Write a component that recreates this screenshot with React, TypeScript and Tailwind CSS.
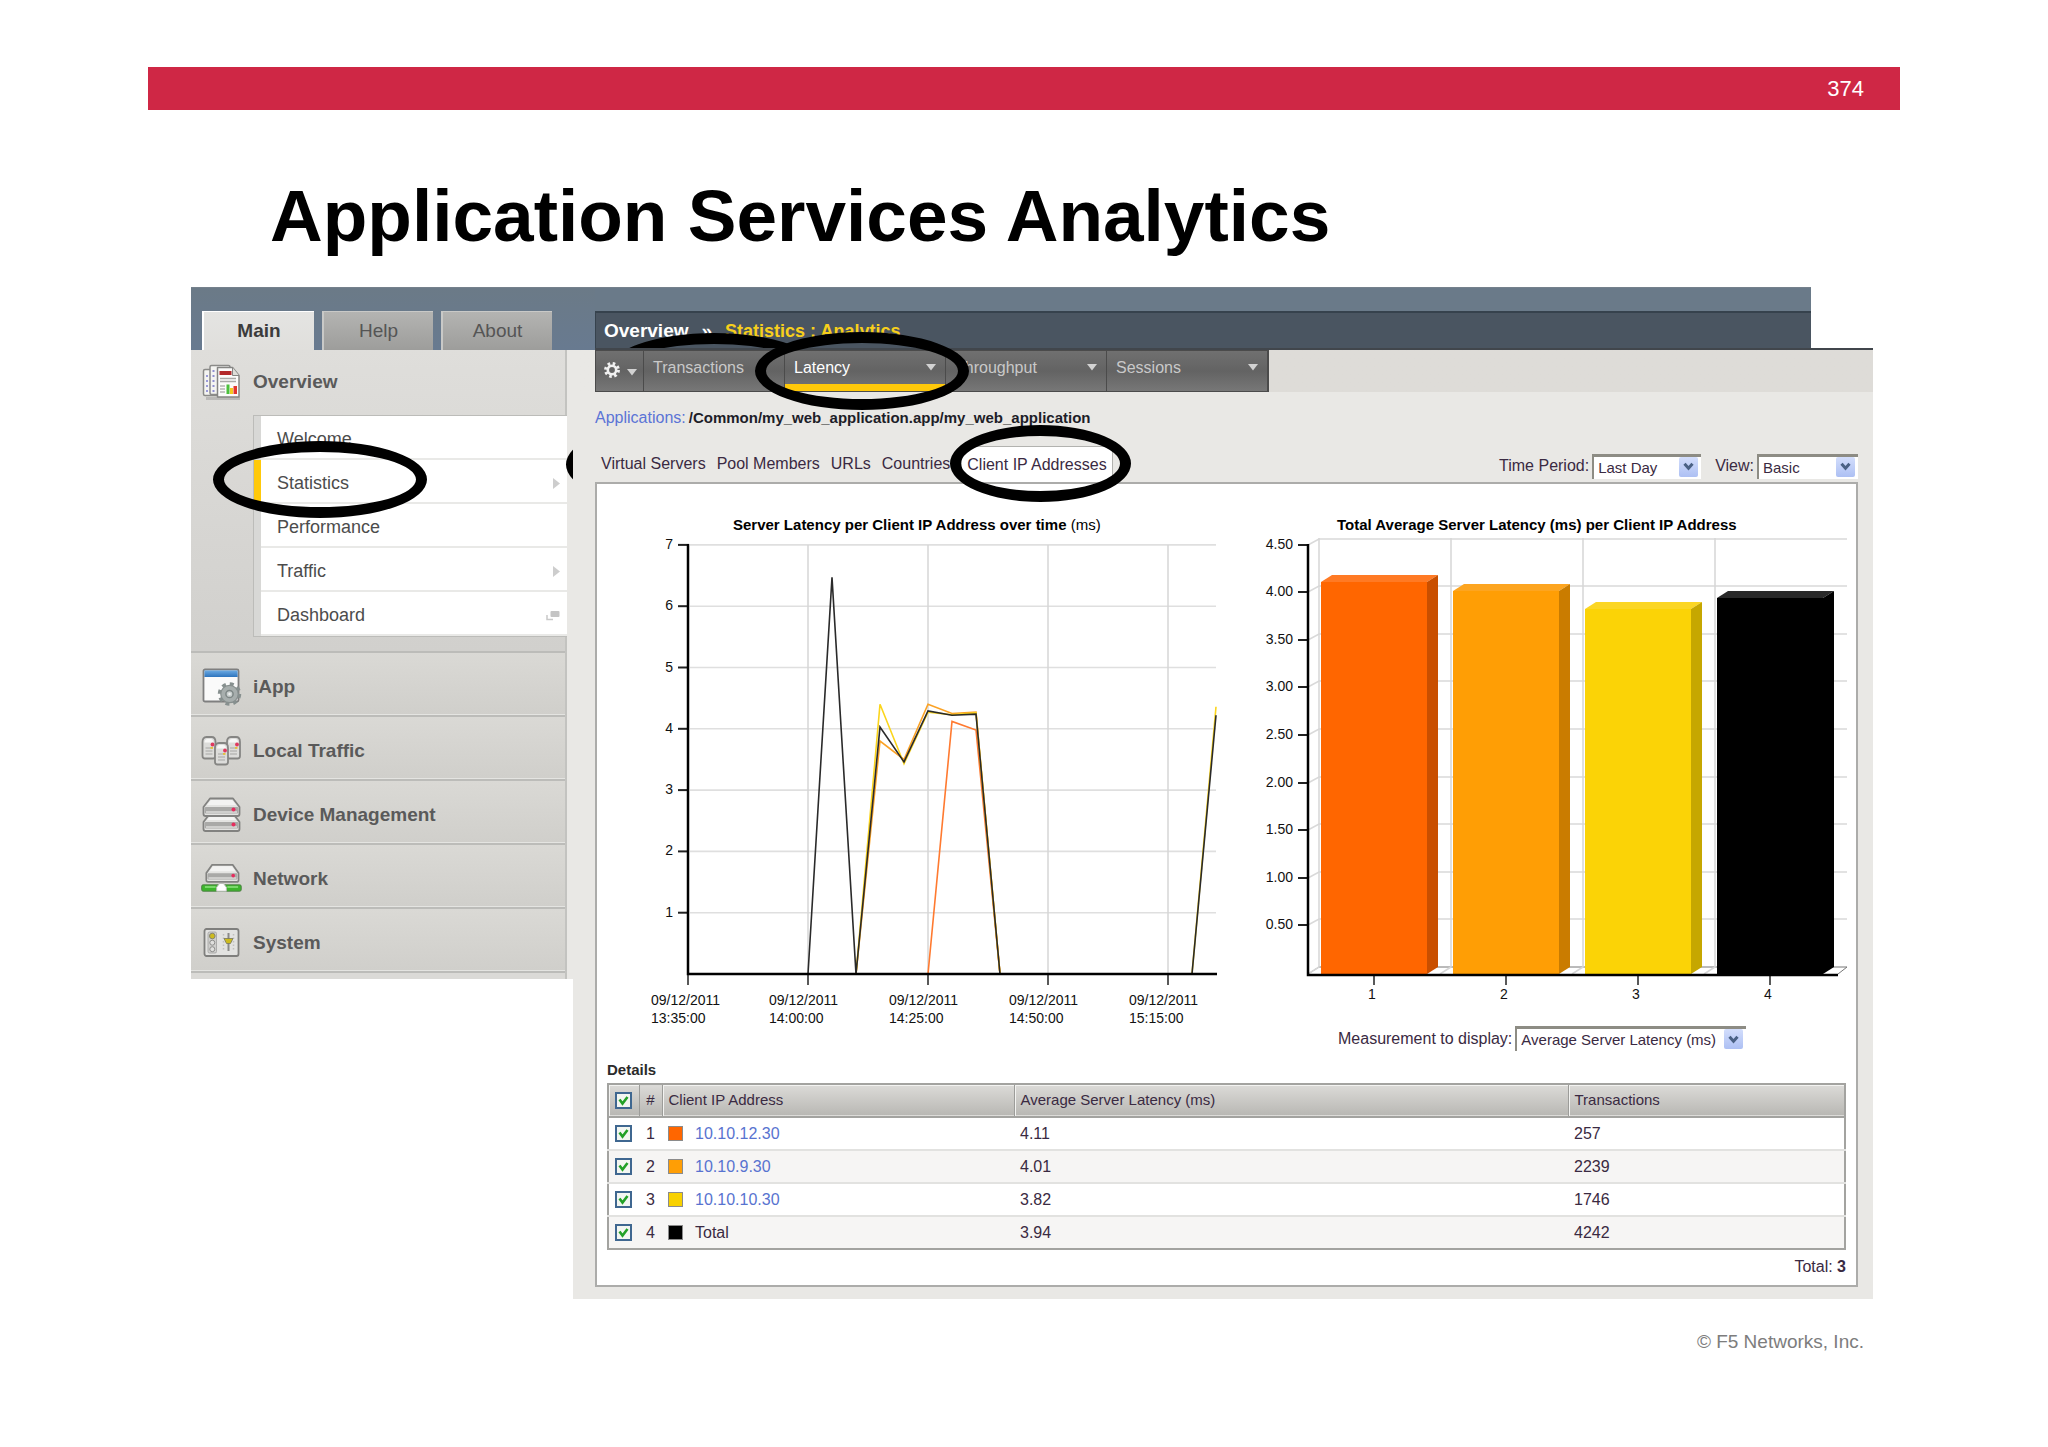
import React from "react";

const ring = "pointer-events-none absolute z-20 rounded-[50%] border-[11px] border-black";

function Ring({ className }: { className: string }) {
  return <span aria-hidden="true" className={`${ring} ${className}`} />;
}

/* ---------- sidebar icons ---------- */

function ReportsIcon() {
  return (
    <svg width="40" height="38" viewBox="0 0 40 38">
      <path d="M4 34.500h34" stroke="#00000028" strokeWidth="3" />
      <rect x="1.5" y="5.5" width="20" height="26" rx="1.5" fill="#f4f4f2" stroke="#8b8b89" strokeWidth="1.5" />
      <path d="M5 11v18" stroke="#9a9ad8" strokeWidth="2" strokeDasharray="2 3" />
      <rect x="8" y="1.5" width="20" height="29" rx="1.5" fill="#f4f4f2" stroke="#8b8b89" strokeWidth="1.5" />
      <path d="M11.500 6v23" stroke="#8f8fd0" strokeWidth="2" strokeDasharray="2 3" />
      <path d="M15.500 3.500h15l6.500 8v21.500h-21.500z" fill="#fbfbfa" stroke="#858583" strokeWidth="1.500" strokeLinejoin="round" />
      <path d="M30.500 3.500v8h6.500" fill="#deded9" stroke="#858583" />
      <rect x="17.500" y="7" width="12" height="4" fill="#b3282a" />
      <path d="M18 14.500h16M18 17.500h16" stroke="#a9a9a7" strokeWidth="1.500" />
      <path d="M18 22h5M18 25h5M18 28h5" stroke="#b5b5b3" strokeWidth="1.500" />
      <rect x="24.500" y="20.500" width="3" height="9.500" fill="#4bc03c" />
      <rect x="28" y="24" width="3" height="6" fill="#f3c820" />
      <rect x="31.500" y="22" width="3.500" height="8" fill="#e2362e" />
    </svg>
  );
}

function IAppIcon() {
  return (
    <svg width="40" height="40" viewBox="0 0 40 40">
      <defs>
        <linearGradient id="iappBar" x1="0" y1="0" x2="0" y2="1">
          <stop offset="0" stopColor="#6cabe4" />
          <stop offset="1" stopColor="#2e74bd" />
        </linearGradient>
      </defs>
      <rect x="1.500" y="2.500" width="35" height="32" rx="1.500" fill="#fafafa" stroke="#7f7f7f" strokeWidth="1.800" />
      <rect x="2.400" y="3.400" width="33.200" height="6.600" fill="url(#iappBar)" />
      <circle cx="27.500" cy="27" r="9.500" fill="none" stroke="#87908f" strokeWidth="4.500" strokeDasharray="3.730 3.730" />
      <circle cx="27.500" cy="27" r="8.700" fill="#a7aead" stroke="#878f8e" strokeWidth="1.200" />
      <circle cx="27.500" cy="27" r="3.600" fill="#c9cfce" stroke="#7d8685" strokeWidth="1.500" />
      <circle cx="27.500" cy="27" r="1.200" fill="#eef0f0" />
    </svg>
  );
}

function TrafficIcon() {
  const tower = (x: number, y: number) => (
    <g key={x} transform={`translate(${x} ${y})`}>
      <path d="M1 6 Q1 1 5 1h5q4 0 4 5v14q0 2.500-2.500 2.500h-8Q1 22.500 1 20z" fill="#dcdcda" stroke="#858583" strokeWidth="1.800" />
      <path d="M3 6.500q0-3.500 3-3.500h3q3 0 3 3.500z" fill="#f7f7f6" />
      <path d="M4 12h7M4 15h7M4 18h7" stroke="#a6a6a4" strokeWidth="1" />
      <circle cx="11" cy="8.500" r="1.900" fill="#e0395f" />
      <rect x="9" y="11" width="2.500" height="1.800" fill="#e5c23a" />
    </g>
  );
  return (
    <svg width="41" height="32" viewBox="0 0 41 32">
      {tower(0.5, 1)}
      {tower(25, 1)}
      {tower(13, 7)}
    </svg>
  );
}

function Server({ y }: { y: number }) {
  return (
    <g transform={`translate(0 ${y})`}>
      <path d="M8 1h23l6.500 8.500v7q0 2-2 2h-32q-2 0-2-2v-7z" fill="#e3e3e1" stroke="#828280" strokeWidth="1.800" strokeLinejoin="round" />
      <path d="M9 2.500h21l4 5h-29z" fill="#f3f3f2" />
      <rect x="2.800" y="9.500" width="33.500" height="6.500" rx="1" fill="#a9a9a7" />
      <path d="M4 14.500h31" stroke="#cfcfcd" strokeWidth="2" />
      <circle cx="31.500" cy="12" r="2" fill="#e62d5e" />
    </g>
  );
}

function DevicesIcon() {
  return (
    <svg width="40" height="36" viewBox="0 0 40 36">
      <Server y={15.500} />
      <Server y={0.500} />
    </svg>
  );
}

function NetworkIcon() {
  return (
    <svg width="42" height="32" viewBox="0 0 42 32">
      <g transform="translate(4 0.500) scale(0.920 1)">
        <Server y={0} />
      </g>
      <rect x="0.700" y="22" width="40.500" height="6.500" rx="1.500" fill="#3db52c" stroke="#4d7f45" />
      <path d="M4 24.300h11M27 24.300h11" stroke="#8fe37f" strokeWidth="1.500" />
      <path d="M16 28.500v-4l3-4h4l3 4v4z" fill="#fff" stroke="#b9b9b7" />
    </svg>
  );
}

function SystemIcon() {
  return (
    <svg width="38" height="32" viewBox="0 0 38 32">
      <rect x="1.500" y="2" width="34" height="27" rx="2" fill="#e2e2e0" stroke="#7f7f7d" strokeWidth="1.800" />
      <rect x="5" y="5" width="8.500" height="21" rx="1.500" fill="#cfcfcd" stroke="#a1a19f" strokeWidth="0.800" />
      <circle cx="9.300" cy="9" r="2.800" fill="#cdbb1e" stroke="#85856f" />
      <circle cx="9.300" cy="15.700" r="2.500" fill="#e0e0de" stroke="#8e8e8c" />
      <circle cx="9.300" cy="22.200" r="2.500" fill="#e0e0de" stroke="#8e8e8c" />
      <path d="M25.500 6v18" stroke="#8a8a88" strokeWidth="2" />
      <path d="M20.500 7v16M30.500 7v16" stroke="#c0c0be" strokeWidth="1.500" strokeDasharray="1.500 2" />
      <path d="M21 11.500h9l-2.500 5h-4z" fill="#cdbb1e" stroke="#77775f" strokeWidth="0.800" />
    </svg>
  );
}

/* ---------- form controls ---------- */

function Chevron() {
  return (
    <span className="pointer-events-none absolute top-[3px] right-[3px] bottom-[2px] flex w-[19px] items-center justify-center rounded-[2px] bg-gradient-to-b from-[#d3defc] to-[#adc0f3]">
      <svg width="11" height="9" viewBox="0 0 11 9">
        <path d="M1.500 1.800l4 4.400 4-4.400" fill="none" stroke="#4a6185" strokeWidth="3" />
      </svg>
    </span>
  );
}

function Dropdown({ id, label, value, width }: { id: string; label: string; value: string; width: string }) {
  return (
    <div className="flex items-center gap-[3px] text-[16px] text-[#3a2a42]">
      <label htmlFor={id} className="whitespace-nowrap">{label}</label>
      <span className={`relative block h-[25px] ${width}`}>
        <select
          id={id}
          defaultValue={value}
          className="block h-full w-full appearance-none border-t-[3px] border-l-2 border-[#8d8c84] bg-white pl-1 text-[15px] leading-[20px] text-[#3a2a42] outline-none"
        >
          <option>{value}</option>
        </select>
        <Chevron />
      </span>
    </div>
  );
}

function Check({ label }: { label: string }) {
  return (
    <span className="relative block size-[17px]">
      <input
        type="checkbox"
        defaultChecked
        aria-label={label}
        className="peer block size-full appearance-none border-2 border-[#3f6790] bg-[#f3f6f1]"
      />
      <svg className="pointer-events-none absolute inset-0 hidden peer-checked:block" width="17" height="17" viewBox="0 0 17 17">
        <path d="M4.500 7.500l3 4 5-6.500" fill="none" stroke="#23a127" strokeWidth="2.600" />
      </svg>
    </span>
  );
}

function Caret({ className = "" }: { className?: string }) {
  return (
    <svg className={className} width="10" height="7" viewBox="0 0 10 7">
      <path d="M0 0h10l-5 6.500z" fill="#d2d2d2" />
    </svg>
  );
}

/* ---------- charts ---------- */

const px = (k: number) => 91 + 24 * k;
const py = (v: number) => Math.round((490 - 61.3 * v) * 10) / 10;
const line = (pts: number[][]) => pts.map(([k, v]) => `${px(k)},${py(v)}`).join(" ");

const series = [
  { color: "#ff7a30", pts: [[10, 0], [11, 4.12], [12, 3.98], [13, 0]] },
  { color: "#fba225", pts: [[7, 0], [8, 3.8], [9, 3.5], [10, 4.4], [11, 4.25], [12, 4.27], [13, 0]] },
  { color: "#fbd51c", pts: [[7, 0], [8, 4.4], [9, 3.43], [10, 4.27], [11, 4.23], [12, 4.26], [13, 0]] },
  { color: "#fbd51c", pts: [[21, 0], [22, 4.36]] },
  {
    color: "#2a2a2a",
    pts: [[5, 0], [6, 6.47], [7, 0], [8, 4.03], [9, 3.46], [10, 4.29], [11, 4.22], [12, 4.24], [13, 0]],
  },
  { color: "#2a2a2a", pts: [[21, 0], [22, 4.22]] },
];

const times = ["13:35:00", "14:00:00", "14:25:00", "14:50:00", "15:15:00"];

function LineChart() {
  return (
    <svg width="630" height="550" viewBox="0 0 630 550" role="img" aria-label="Server latency over time" className="font-['Liberation_Sans',Arial,sans-serif]">
      <text x="136" y="46" fontSize="15" fontWeight="bold" fill="#000">
        Server Latency per Client IP Address over time <tspan fontWeight="normal">(ms)</tspan>
      </text>
      {[1, 2, 3, 4, 5, 6, 7].map((v) => (
        <g key={v}>
          <path d={`M93 ${py(v)}H619`} stroke="#dfdfdf" strokeWidth="1.600" />
          <path d={`M81 ${py(v)}H92`} stroke="#222" strokeWidth="2" />
          <text x="76" y={py(v) + 4} fontSize="14" textAnchor="end" fill="#111">{v}</text>
        </g>
      ))}
      {times.map((t, i) => {
        const left = px(i * 5) - (i === 0 ? 37 : 39);
        return (
          <g key={t}>
            {i > 0 && <path d={`M${px(i * 5)} 61V490`} stroke="#d6d6d6" strokeWidth="1.500" />}
            <path d={`M${px(i * 5)} 490V501`} stroke="#222" strokeWidth="1.500" />
            <text x={left} y="521" fontSize="14" fill="#111">09/12/2011</text>
            <text x={left} y="539" fontSize="14" fill="#111">{t}</text>
          </g>
        );
      })}
      {series.map((s, i) => (
        <polyline key={i} points={line(s.pts)} fill="none" stroke={s.color} strokeWidth="1.600" />
      ))}
      <path d="M91 60V490H620" fill="none" stroke="#000" strokeWidth="2.500" />
    </svg>
  );
}

const bars = [
  { v: 4.11, front: "#ff6600", top: "#ff7a24", side: "#c94f00" },
  { v: 4.01, front: "#ff9e05", top: "#fda520", side: "#ca7c00" },
  { v: 3.82, front: "#fbd306", top: "#fbd624", side: "#c6a700" },
  { v: 3.94, front: "#000000", top: "#292929", side: "#000000" },
];

const by = (v: number) => Math.round(489 - 95.2 * v);

function BarChart() {
  return (
    <svg width="600" height="530" viewBox="0 0 600 530" role="img" aria-label="Average latency per address" className="font-['Liberation_Sans',Arial,sans-serif]">
      <text x="87" y="46" fontSize="15" fontWeight="bold" fill="#000">
        Total Average Server Latency (ms) per Client IP Address
      </text>
      {[0.5, 1, 1.5, 2, 2.5, 3, 3.5, 4, 4.5].map((v) => (
        <g key={v}>
          <path d={`M58 ${by(v)}L69 ${by(v) - 6}H597`} fill="none" stroke="#d9d9d9" strokeWidth="1.500" />
          <path d={`M48 ${by(v)}H58`} stroke="#222" strokeWidth="2" />
          <text x="43" y={by(v) + 4} fontSize="14" textAnchor="end" fill="#111">{v.toFixed(2)}</text>
        </g>
      ))}
      <path d="M58 490L69 483H597L588 490" fill="none" stroke="#777" />
      {bars.map((b, i) => {
        const x = 71 + 132 * i;
        const y = by(b.v);
        return (
          <g key={i}>
            <path d={`M${x - 2} 54V483l-11 7`} fill="none" stroke="#d6d6d6" strokeWidth="1.500" />
            <path d={`M${x} ${y}l11-7h106l-11 7z`} fill={b.top} />
            <path d={`M${x + 106} ${y}l11-7V483l-11 7z`} fill={b.side} />
            <rect x={x} y={y} width="106" height={490 - y} fill={b.front} />
            <path d={`M${x + 53} 490V501`} stroke="#222" strokeWidth="1.500" />
            <text x={x + 51} y="515" fontSize="14" textAnchor="middle" fill="#111">{i + 1}</text>
          </g>
        );
      })}
      <path d="M58 60V491H588" fill="none" stroke="#000" strokeWidth="2.500" />
    </svg>
  );
}

/* ---------- data ---------- */

const sections = [
  { name: "iApp", icon: <IAppIcon /> },
  { name: "Local Traffic", icon: <TrafficIcon /> },
  { name: "Device Management", icon: <DevicesIcon /> },
  { name: "Network", icon: <NetworkIcon /> },
  { name: "System", icon: <SystemIcon /> },
];

const rows = [
  { ip: "10.10.12.30", swatch: "bg-[#ff6600]", avg: "4.11", count: "257", link: true },
  { ip: "10.10.9.30", swatch: "bg-[#ff9e05]", avg: "4.01", count: "2239", link: true },
  { ip: "10.10.10.30", swatch: "bg-[#f8d100]", avg: "3.82", count: "1746", link: true },
  { ip: "Total", swatch: "bg-black", avg: "3.94", count: "4242", link: false },
];

function Sidebar() {
  const item = "relative flex h-[44px] items-center border-b-2 border-[#e9e9e7] bg-white pt-1 pr-[7px] pl-4";
  const arrow = (
    <svg className="ml-auto" width="7" height="11" viewBox="0 0 7 11">
      <path d="M0 0l7 5.500L0 11z" fill="#cdcdcd" />
    </svg>
  );
  return (
    <div className="w-[382px] shrink-0">
      <div className="flex h-[63px] items-end gap-2 border-t border-[#75818c] bg-gradient-to-b from-[#6b7a87] to-[#687a90] pl-[11px] text-[19px]">
        <button className="h-[39px] w-[112px] border-t border-l-2 border-white bg-gradient-to-b from-[#e4e4e2] to-[#e0dfdc] font-bold text-[#3c3c3c]">Main</button>
        <button className="h-[39px] w-[111px] border-t border-l-2 border-[#c9c9c7] bg-gradient-to-b from-[#b4b4b2] to-[#9d9d9b] text-[#555]">Help</button>
        <button className="h-[39px] w-[111px] border-t border-l-2 border-[#c9c9c7] bg-gradient-to-b from-[#b4b4b2] to-[#9d9d9b] text-[#555]">About</button>
      </div>
      <div className="relative overflow-x-clip bg-[#e9e8e5] pr-[6px]">
        <Ring className="top-[76px] left-[375px] h-[77px] w-[181px]" />
        <nav className="border-r-2 border-[#c3c3c0] bg-[#dbdad7] pb-[6px] text-[#5a5a5a]">
          <div className="bg-gradient-to-b from-[#dfdedb] to-[#d1d0cd] pb-[14px]">
            <div className="flex h-[65px] items-center gap-[11px] pl-[11px]">
              <ReportsIcon />
              <span className="text-[19px] font-bold">Overview</span>
            </div>
            <ul className="-mr-[2px] ml-[62px] border border-r-0 border-[#bcbcb9] text-[18px] text-[#4c4c4c]">
              <li className="border-l-[7px] border-[#d8d8d6]"><a href="#welcome" className={item}>Welcome</a></li>
              <li className="relative border-l-[7px] border-[#ffc90a]">
                <a href="#statistics" className={item}>Statistics{arrow}</a>
                <Ring className="-top-[19px] -left-[48px] h-[77px] w-[214px]" />
              </li>
              <li className="border-l-[7px] border-[#d8d8d6]"><a href="#performance" className={item}>Performance</a></li>
              <li className="border-l-[7px] border-[#d8d8d6]"><a href="#traffic" className={item}>Traffic{arrow}</a></li>
              <li className="border-l-[7px] border-[#d8d8d6]">
                <a href="#dashboard" className={item}>
                  Dashboard
                  <svg className="ml-auto" width="14" height="11" viewBox="0 0 14 11">
                    <path d="M1 5v4.500h6" fill="none" stroke="#c9c9c9" strokeWidth="1.500" />
                    <rect x="4.500" y="1" width="9" height="6" rx="1" fill="#c4c4c4" />
                  </svg>
                </a>
              </li>
            </ul>
          </div>
          {sections.map((s) => (
            <a
              key={s.name}
              href="#section"
              className="flex h-[64px] items-center gap-[11px] border-t-2 border-b border-t-[#bcbcb9] border-b-[#e4e4e1] bg-gradient-to-b from-[#dad9d5] to-[#d0cfcb] pt-[7px] pl-[10px] text-[19px] font-bold"
            >
              <span className="flex w-[41px] justify-center">{s.icon}</span>
              {s.name}
            </a>
          ))}
          <div className="border-t-2 border-[#bcbcb9]" />
        </nav>
      </div>
    </div>
  );
}

function MenuBar() {
  const cell = "relative flex h-full items-start justify-between border-r border-[#4b4b4b] pt-[5px] pr-[9px] pl-[9px] text-[16px] leading-[24px]";
  return (
    <div className="flex h-[42px] bg-gradient-to-r from-[#e9e8e5] from-[22px] to-[#dedcd8] to-[22px] pl-[22px]">
      <div className="flex h-full border border-[#4b4b4b] bg-gradient-to-b from-[#707070] via-[#636363] to-[#777777] text-[#c9c9c9]">
        <button aria-label="Settings" className={`${cell} w-[48px]`}>
          <svg className="mt-[6px] -ml-[1px]" width="16" height="16" viewBox="0 0 16 16">
            <circle cx="8" cy="8" r="6.200" fill="none" stroke="#f0f0f0" strokeWidth="3.500" strokeDasharray="2.430 2.430" />
            <circle cx="8" cy="8" r="4.200" fill="none" stroke="#f0f0f0" strokeWidth="2.600" />
          </svg>
          <Caret className="mt-[13px] -mr-[3px]" />
        </button>
        <button className={`${cell} w-[141px]`}>Transactions</button>
        <button className={`${cell} w-[161px] border-b-[7px] border-b-[#ffc90a] text-white`}>
          Latency<Caret className="mt-2" />
          <Ring className="-top-[19px] -left-[30px] h-[78px] w-[214px]" />
        </button>
        <button className={`${cell} w-[161px]`}>Throughput<Caret className="mt-2" /></button>
        <button className={`${cell} w-[161px]`}>Sessions<Caret className="mt-2" /></button>
      </div>
    </div>
  );
}

function DetailsTable() {
  const head = "border-l border-[#9c9c99] px-[6px] text-left text-[15px] font-normal shadow-[inset_1px_1px_0_#f3f3f1]";
  return (
    <table className="w-full table-fixed border-collapse border-2 border-[#a3a3a0] text-[16px] text-[#3a2a42]">
      <colgroup>
        <col className="w-[31px]" />
        <col className="w-[23px]" />
        <col className="w-[352px]" />
        <col className="w-[554px]" />
        <col />
      </colgroup>
      <thead>
        <tr className="h-[33px] border-b-2 border-[#a3a3a0] bg-gradient-to-b from-[#dddcd9] to-[#b9b8b4]">
          <th className={head}><Check label="Select all" /></th>
          <th className="border-l border-[#9c9c99] text-center text-[15px] font-normal">#</th>
          <th className={head}>Client IP Address</th>
          <th className={head}>Average Server Latency (ms)</th>
          <th className={head}>Transactions</th>
        </tr>
      </thead>
      <tbody>
        {rows.map((r, i) => (
          <tr key={r.ip} className="h-[33px] border-b-2 border-[#e2e2e0] odd:bg-white even:bg-[#f6f5f4] last:border-[#a3a3a0]">
            <td className="px-[6px]"><Check label={`Select ${r.ip}`} /></td>
            <td className="text-center">{i + 1}</td>
            <td className="px-[6px]">
              <span className="flex items-center gap-[12px]">
                <span className={`size-[15px] border border-[#8b8b8b] ${r.swatch}`} />
                {r.link ? <a href="#address" className="text-[#5873d0]">{r.ip}</a> : <span>{r.ip}</span>}
              </span>
            </td>
            <td className="px-[6px]">{r.avg}</td>
            <td className="px-[6px]">{r.count}</td>
          </tr>
        ))}
      </tbody>
    </table>
  );
}

function Analytics() {
  return (
    <div className="min-w-0 flex-1">
      <div className="flex">
        <div className="w-[22px] border-t border-[#75818c] bg-gradient-to-b from-[#6b7a87] to-[#687a90]" />
        <div className="flex-1 border-b-2 border-[#41464c]">
          <div className="relative mr-[62px] h-[61px] overflow-hidden border-t border-[#75818c] bg-[#6a7a89] pt-[23px]">
            <div className="flex h-[38px] items-center gap-[13px] border-t-2 border-l border-[#36424d] bg-[#4a5561] pl-2 text-[19px] font-bold text-white">
              <span>Overview</span>
              <span>»</span>
              <span className="text-[18px] text-[#f7cf1b]">Statistics : Analytics</span>
            </div>
            <Ring className="top-[45px] left-[12px] h-[77px] w-[214px]" />
          </div>
        </div>
      </div>
      <MenuBar />
      <div className="bg-[#e9e8e5] pr-[15px] pb-[12px] pl-[22px]">
        <div className="flex h-[50px] items-center gap-[3px] pt-[2px]">
          <a href="#applications" className="text-[16px] text-[#5b74d6]">Applications:</a>
          <span className="text-[15px] font-bold text-[#1d1d28]">/Common/my_web_application.app/my_web_application</span>
        </div>
        <div className="flex h-[40px] items-center justify-between">
          <div className="flex h-full items-center gap-[11px] pt-1 pl-[6px] text-[16px] text-[#3a2a42]">
            <a href="#virtual">Virtual Servers</a>
            <a href="#pool">Pool Members</a>
            <a href="#urls">URLs</a>
            <a href="#countries">Countries</a>
            <a href="#clients" className="relative flex h-[36px] items-center border border-b-0 border-[#b2b2af] bg-white px-[5px]">
              Client IP Addresses
              <Ring className="-top-[22px] -left-[12px] h-[77px] w-[181px]" />
            </a>
          </div>
          <div className="flex gap-[14px] pt-[8px]">
            <Dropdown id="period" label="Time Period:" value="Last Day" width="w-[109px]" />
            <Dropdown id="view" label="View:" value="Basic" width="w-[101px]" />
          </div>
        </div>
        <section className="border-2 border-[#acacaa] bg-white px-[10px] pb-[5px]">
          <div className="-mx-[10px] flex justify-between pr-[6px]">
            <LineChart />
            <div>
              <BarChart />
              <div className="mt-[12px] ml-[88px]">
                <Dropdown id="measurement" label="Measurement to display:" value="Average Server Latency (ms)" width="w-[231px]" />
              </div>
            </div>
          </div>
          <h2 className="mt-[6px] text-[15px] leading-[26px] font-bold text-[#2b2b2b]">Details</h2>
          <DetailsTable />
          <p className="mt-1 text-right text-[16px] leading-[26px] text-[#3a2a42]">
            Total: <b>3</b>
          </p>
        </section>
      </div>
    </div>
  );
}

export default function App() {
  return (
    <main className="bg-white px-[148px] pt-[67px] pb-[90px] font-['Liberation_Sans',Arial,sans-serif]">
      <div className="flex h-[43px] items-center justify-end bg-[#cf2745] pr-[36px] text-[22px] text-white">374</div>
      <h1 className="mt-[66px] ml-[122px] text-[73px] leading-[80px] font-bold text-black">Application Services Analytics</h1>
      <div className="mt-[31px] mr-[27px] ml-[43px] flex items-start">
        <Sidebar />
        <Analytics />
      </div>
      <footer className="mt-[29px] pr-[36px] text-right text-[19px] leading-[28px] text-[#7d7d7d]">© F5 Networks, Inc.</footer>
    </main>
  );
}
